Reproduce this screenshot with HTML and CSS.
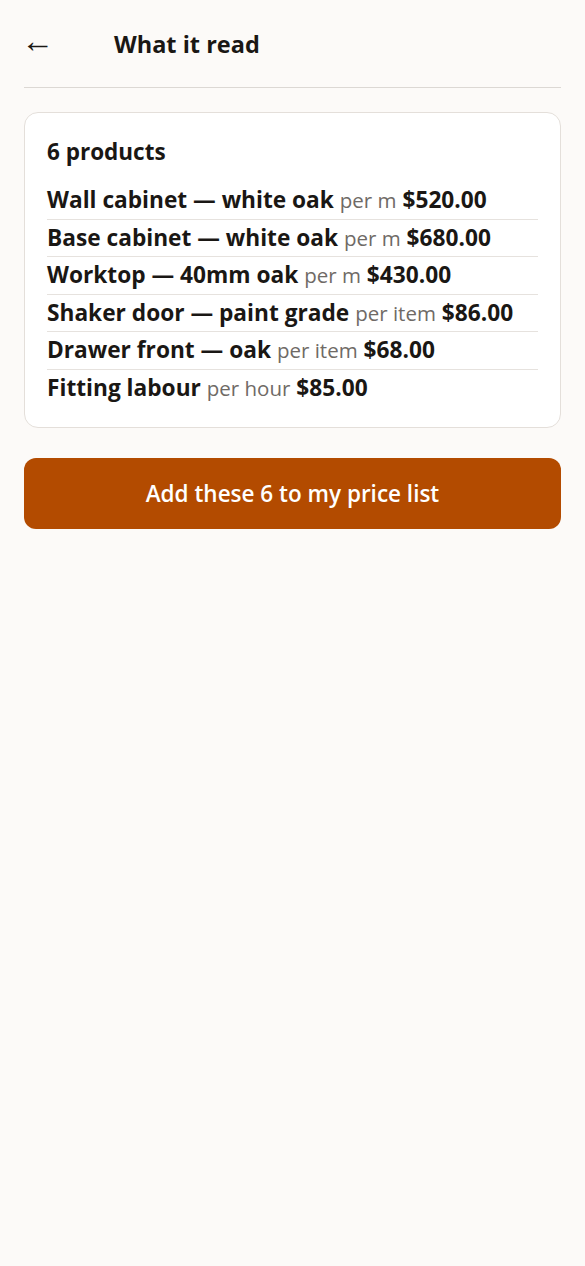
FILE: index.html
```html
<!DOCTYPE html>
<html>
	<head>
		<meta charset="UTF-8">
		<title>What it read</title>
		<link rel="stylesheet" href="styles.css">
	</head>
	<body>
		<div class="page">
			<div class="header">
				<a class="back" href="javascript:;">&larr;</a>
				<h1>What it read</h1>
			</div>
			<div class="card">
				<h2>6 products</h2>
				<ul class="list">
					<li><b>Wall cabinet — white oak</b> <span class="unit">per m</span> <b>$520.00</b></li>
					<li><b>Base cabinet — white oak</b> <span class="unit">per m</span> <b>$680.00</b></li>
					<li><b>Worktop — 40mm oak</b> <span class="unit">per m</span> <b>$430.00</b></li>
					<li><b>Shaker door — paint grade</b> <span class="unit">per item</span> <b>$86.00</b></li>
					<li><b>Drawer front — oak</b> <span class="unit">per item</span> <b>$68.00</b></li>
					<li><b>Fitting labour</b> <span class="unit">per hour</span> <b>$85.00</b></li>
				</ul>
			</div>
			<button class="add">Add these 6 to my price list</button>
		</div>
	</body>
</html>
```

FILE: styles.css
```css
body{
	margin: 0;
	background: #fcfaf8;
	font-family: "Open Sans", "Noto Sans", sans-serif;
	color: #1a1714;
}
.page{
	padding: 0 24px;
}
.header{
	display: flex;
	align-items: center;
	height: 87px;
	border-bottom: 1px solid #dcd8d4;
}
.back{
	width: 93px;
	margin: -8px 0 0 -3px;
	font-size: 33px;
	color: #1a1714;
	text-decoration: none;
	line-height: 1;
}
.header h1{
	margin: 0;
	font-size: 23.5px;
	font-weight: 700;
}
.card{
	margin-top: 24px;
	background: #fff;
	border: 1px solid #e4dfda;
	border-radius: 14px;
	padding: 24px 22px 20px;
}
.card h2{
	margin: 0 0 15px;
	font-size: 22.5px;
	line-height: 30px;
	font-weight: 700;
}
.list{
	list-style: none;
	margin: 0;
	padding: 0;
}
.list li{
	font-size: 22.7px;
	line-height: 28.6px;
	padding: 4px 0;
	border-bottom: 1px solid #e6e2de;
	white-space: nowrap;
}
.list li:last-child{
	border-bottom: none;
}
.list b{
	font-weight: 700;
}
.unit{
	color: #6f6a66;
	font-size: 20.5px;
	line-height: 1;
}
.add{
	display: block;
	width: 100%;
	margin-top: 30px;
	height: 71px;
	border: none;
	border-radius: 12px;
	background: #b34b00;
	color: #fff;
	font-family: inherit;
	font-size: 22.5px;
	font-weight: 600;
}
```
